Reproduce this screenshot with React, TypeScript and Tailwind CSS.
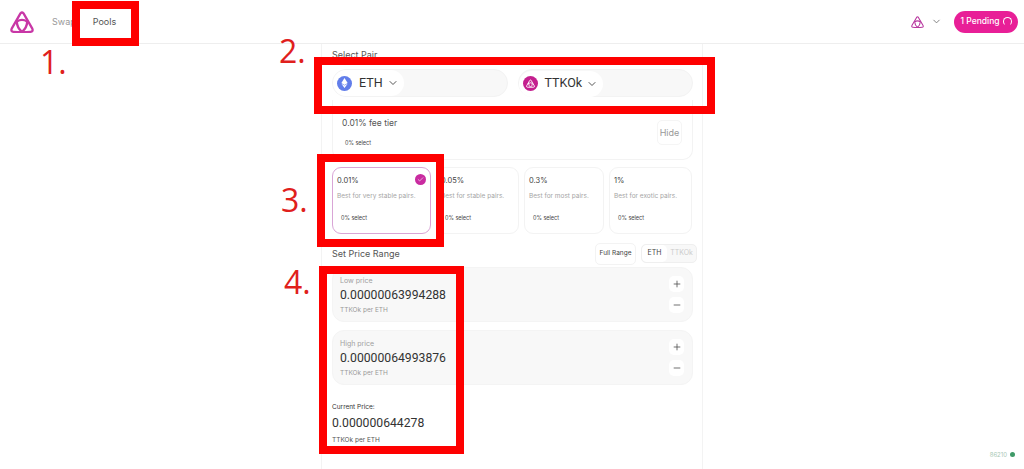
import { ChevronDown, Check, Plus, Minus } from 'lucide-react'

const LogoMark = ({ className, sw = 2.3 }: { className: string; sw?: number }) => (
  <svg viewBox="0 0 24 22" fill="none" stroke="currentColor" strokeWidth={sw} strokeLinejoin="round" strokeLinecap="round" className={className}>
    <path d="M10.6 2.2 Q12 0.8 13.4 2.2 L22.3 17.6 Q23.4 20.6 20.6 20.8 Q12 21.6 3.4 20.8 Q0.6 20.6 1.7 17.6 Z" />
    <path d="M6.8 10.6 Q12 7.2 17.2 10.6 Q17 16.6 12 20.9 Q7 16.6 6.8 10.6 Z" />
  </svg>
)

function TokenChip({ name, icon }: { name: string; icon: React.ReactNode }) {
  return (
    <div className="flex-1 h-[28px] rounded-[14px] bg-[#f8f8f8] border border-[#f3f3f3]">
      <div className="inline-flex items-center h-full bg-white rounded-[14px] pl-[4px] pr-[5px]">
        {icon}
        <span className="ml-[7px] text-[12.5px] text-[#333] font-['Roboto',sans-serif]">{name}</span>
        <ChevronDown size={12} className="ml-[4px] text-[#555]" />
      </div>
    </div>
  )
}

function FeeCard({ pct, desc, active, className }: { pct: string; desc: string; active?: boolean; className: string }) {
  return (
    <div className={`relative h-[67px] rounded-[9px] border pl-[4px] pt-[7px] ${active ? 'border-[#d9a5d6]' : 'border-[#f3f3f3]'} ${className}`}>
      <div className="text-[7.5px] leading-[11px] text-[#444]">{pct}</div>
      <div className="text-[6.5px] leading-[10px] mt-[5px] text-[#a5a5a5] whitespace-nowrap">{desc}</div>
      <div className="text-[5.5px] leading-[10px] mt-[12px] ml-[4px] text-[#444]">0% select</div>
      {active && (
        <div className="absolute right-[4px] top-[6px] w-[11px] h-[11px] rounded-full bg-[#c92ba0] flex items-center justify-center">
          <Check size={7} className="text-white" />
        </div>
      )}
    </div>
  )
}

function PriceBox({ label, value }: { label: string; value: string }) {
  return (
    <div className="h-[55px] rounded-[12px] bg-[#f8f8f8] border border-[#f4f4f4] flex items-center justify-between pl-[7px] pr-[8px]">
      <div className="pt-[2px]">
        <div className="text-[7px] leading-[10px] text-[#a0a0a0]">{label}</div>
        <div className="text-[12.2px] leading-[17px] mt-[1px] text-[#333] font-['Roboto',sans-serif]">{value}</div>
        <div className="text-[6.5px] leading-[10px] mt-[1px] text-[#999]">TTKOk per ETH</div>
      </div>
      <div className="flex flex-col gap-[5px]">
        <div className="w-[15px] h-[16px] bg-white rounded-[5px] flex items-center justify-center"><Plus size={10} className="text-[#555]" /></div>
        <div className="w-[15px] h-[16px] bg-white rounded-[5px] flex items-center justify-center"><Minus size={10} className="text-[#555]" /></div>
      </div>
    </div>
  )
}

// red annotations drawn on top of the screenshot
function Marks() {
  return (
    <>
      <div className="absolute left-[72px] top-[1px] w-[67px] h-[45px] border-[8px] border-[#fe0000]" />
      <div className="absolute left-[314px] top-[57px] w-[401px] h-[57px] border-[8px] border-[#fe0000]" />
      <div className="absolute left-[317px] top-[154px] w-[127px] h-[93px] border-[8px] border-[#fe0000]" />
      <div className="absolute left-[319px] top-[266px] w-[145px] h-[188px] border-[8px] border-[#fe0000]" />
      <span className="absolute left-[40px] top-[42px] text-[32px] leading-[40px] text-[#e0201c] font-['Open_Sans',sans-serif]">1.</span>
      <span className="absolute left-[279px] top-[31px] text-[32px] leading-[40px] text-[#e0201c] font-['Open_Sans',sans-serif]">2.</span>
      <span className="absolute left-[281px] top-[180px] text-[32px] leading-[40px] text-[#e0201c] font-['Open_Sans',sans-serif]">3.</span>
      <span className="absolute left-[284px] top-[262px] text-[32px] leading-[40px] text-[#e0201c] font-['Open_Sans',sans-serif]">4.</span>
    </>
  )
}

export default function App() {
  return (
    <div className="relative w-[1024px] h-[469px] overflow-hidden bg-white font-['Inter',sans-serif]">
      <header className="h-[44px] border-b border-[#eeeeee] flex items-center pl-[10px] pr-[6px]">
        <LogoMark className="w-[24px] h-[22px] text-[#c837a6]" />
        <nav className="flex items-center ml-[18px] gap-[17px] text-[9px]">
          <span className="text-[#999]">Swap</span>
          <span className="text-[#555]">Pools</span>
        </nav>
        <div className="ml-auto flex items-center">
          <LogoMark sw={2} className="w-[13px] h-[12px] text-[#b8379f]" />
          <ChevronDown size={11} className="text-[#777] ml-[7px]" />
          <div className="ml-[12px] h-[22px] w-[64px] rounded-full bg-[#e81f97] flex items-center justify-center gap-[3px] text-white text-[8.5px] font-medium">
            1 Pending
            <div className="w-[9px] h-[9px] rounded-full border border-white border-b-transparent" />
          </div>
        </div>
      </header>

      <main className="w-[382px] h-[425px] ml-[321px] border-x border-[#f3f3f3] pl-[10px] pr-[9px]">
        <div className="text-[9px] leading-[12px] pt-[5px] text-[#555]">Select Pair</div>
        <div className="flex gap-[10px] mt-[8px]">
          <TokenChip
            name="ETH"
            icon={
              <div className="w-[15px] h-[15px] rounded-full bg-[#627eea] flex items-center justify-center">
                <svg viewBox="0 0 10 16" className="w-[7px] h-[10px]" fill="#fff"><path d="M5 0 L10 8 L5 11 L0 8 Z" /><path d="M5 12 L10 9 L5 16 L0 9 Z" /></svg>
              </div>
            }
          />
          <TokenChip
            name="TTKOk"
            icon={
              <div className="w-[15px] h-[15px] rounded-full bg-[#c41f8e] flex items-center justify-center">
                <LogoMark sw={2.4} className="w-[9px] h-[9px] text-white" />
              </div>
            }
          />
        </div>
        <div className="h-[60px] mt-[3px] pt-[6px] rounded-b-[10px] border border-t-0 border-[#f3f3f3] flex items-center justify-between pl-[9px] pr-[10px]">
          <div>
            <div className="text-[8.5px] leading-[12px] text-[#555]">0.01% fee tier</div>
            <div className="text-[5.5px] leading-[10px] mt-[9px] ml-[3px] text-[#444]">0% select</div>
          </div>
          <div className="w-[25px] h-[25px] rounded-[5px] border border-[#f5f5f5] flex items-center justify-center text-[9px] text-[#999]">Hide</div>
        </div>
        <div className="flex mt-[7px] gap-[5px]">
          <FeeCard active pct="0.01%" desc="Best for very stable pairs." className="w-[99px]" />
          <FeeCard pct="0.05%" desc="Best for stable pairs." className="w-[83px]" />
          <FeeCard pct="0.3%" desc="Best for most pairs." className="w-[80px]" />
          <FeeCard pct="1%" desc="Best for exotic pairs." className="w-[83px]" />
        </div>
        <div className="flex items-center justify-between h-[27px] mt-[6px] -mr-[4px]">
          <span className="text-[9px] text-[#555]">Set Price Range</span>
          <div className="flex items-center gap-[5px]">
            <div className="h-[22px] w-[41px] rounded-[5px] border border-[#f3f3f3] flex items-center justify-center text-[6.5px] text-[#444] whitespace-nowrap">Full Range</div>
            <div className="h-[19px] w-[56px] rounded-[5px] border border-[#efefef] bg-[#f8f8f8] flex text-[7px]">
              <span className="w-[25px] bg-white rounded-[5px] flex items-center justify-center text-[#444]">ETH</span>
              <span className="flex-1 flex items-center justify-center text-[#ccc]">TTKOk</span>
            </div>
          </div>
        </div>
        <div className="flex flex-col gap-[8px]">
          <PriceBox label="Low price" value="0.00000063994288" />
          <PriceBox label="High price" value="0.00000064993876" />
        </div>
        <div className="mt-[17px]">
          <div className="text-[6.5px] leading-[10px] text-[#333]">Current Price:</div>
          <div className="text-[12.2px] leading-[17px] mt-[3px] text-[#333] font-['Roboto',sans-serif]">0.000000644278</div>
          <div className="text-[6.5px] leading-[10px] mt-[3px] text-[#555]">TTKOk per ETH</div>
        </div>
      </main>

      <div className="absolute right-[9px] bottom-[10px] flex items-center gap-[3px] text-[6px] text-[#a8c8b4]">
        86210
        <div className="w-[5px] h-[5px] rounded-full bg-[#3f9a68]" />
      </div>

      <Marks />
    </div>
  )
}
